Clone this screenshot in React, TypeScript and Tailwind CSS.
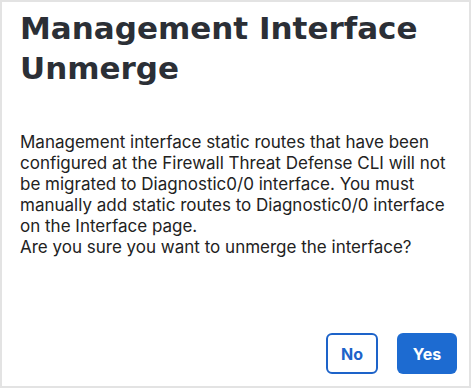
export default function App() {
  return (
    <div className="w-[471px] h-[388px] bg-white border-2 border-[#e3e3e3] flex flex-col">
      <div className="px-[18px] pt-[6px]">
        <h1
          className="text-[31px] leading-[40px] font-bold text-[#2b2f36]"
          style={{ fontFamily: "'DejaVu Sans', 'Noto Sans', sans-serif" }}
        >
          Management Interface Unmerge
        </h1>
      </div>
      <div
        className="px-[18px] pt-[44px] text-[17px] leading-[21px] text-[#222]"
        style={{ fontFamily: "Inter, 'Liberation Sans', sans-serif" }}
      >
        <p>
          Management interface static routes that have been configured at the Firewall Threat Defense CLI will not be
          migrated to Diagnostic0/0 interface. You must manually add static routes to Diagnostic0/0 interface on the
          Interface page.
        </p>
        <p>Are you sure you want to unmerge the interface?</p>
      </div>
      <div
        className="mt-auto flex justify-end gap-[19px] pr-[12px] pb-[12px]"
        style={{ fontFamily: "Inter, 'Liberation Sans', sans-serif" }}
      >
        <button className="w-[52px] h-[41px] rounded-[6px] border-2 border-[#1d63c9] text-[#1d63c9] text-[16px] font-bold bg-white">
          No
        </button>
        <button className="w-[60px] h-[41px] rounded-[6px] bg-[#1d6bd1] text-white text-[16px] font-bold">
          Yes
        </button>
      </div>
    </div>
  );
}
